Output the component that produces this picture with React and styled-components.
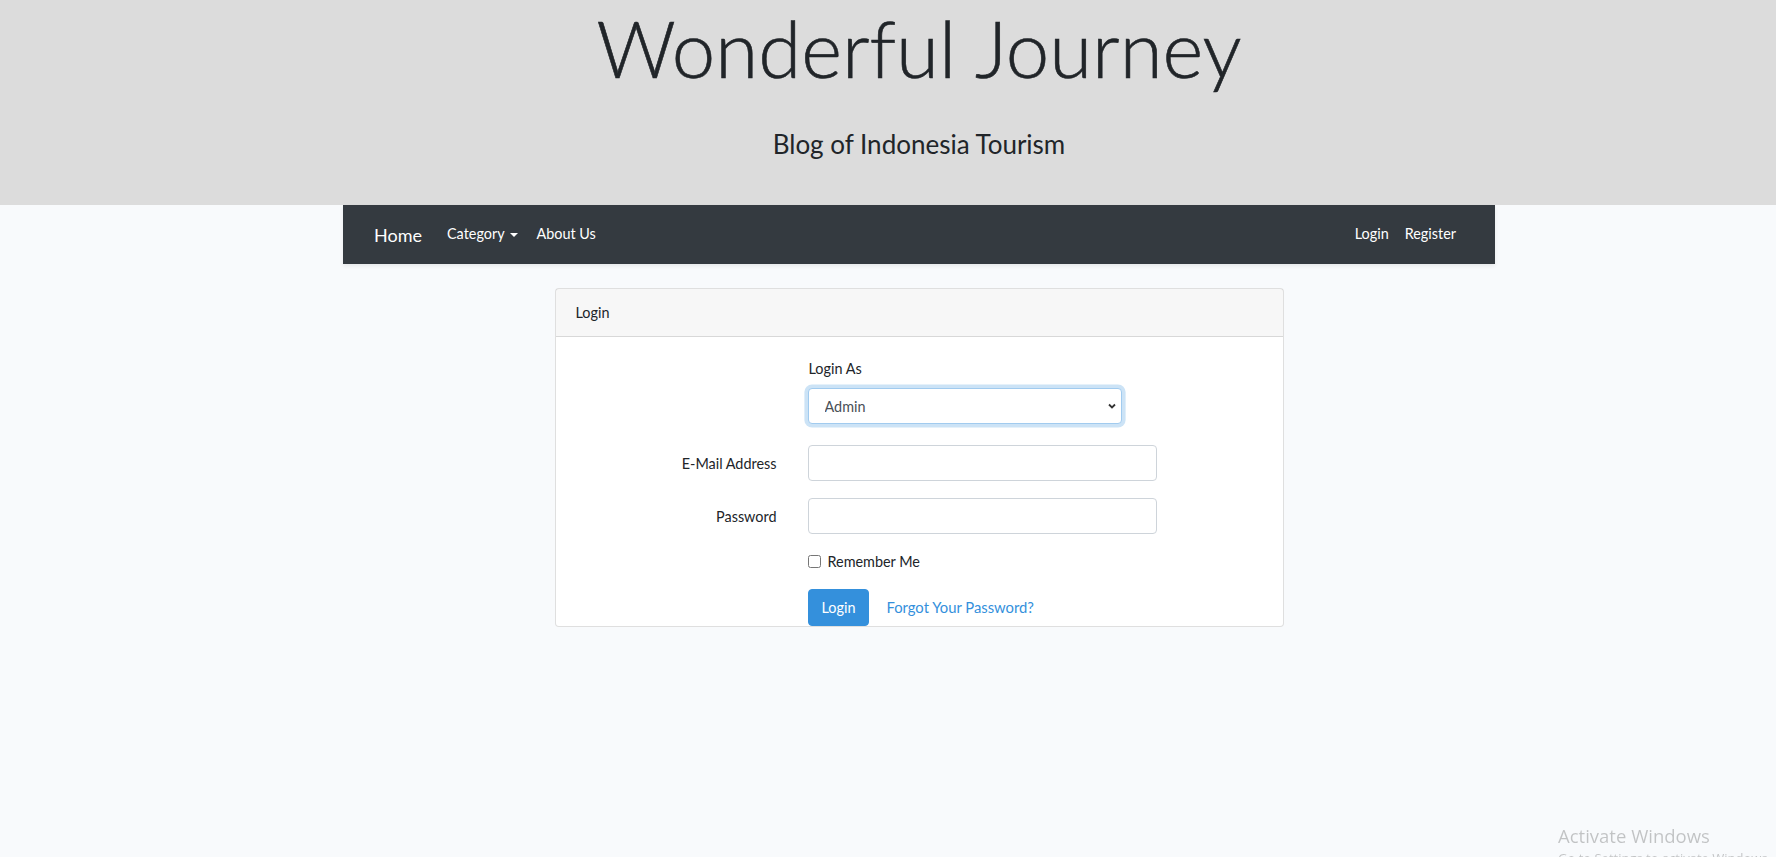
import React from 'react';
import styled, { createGlobalStyle } from 'styled-components';

const GlobalStyle = createGlobalStyle`
  html, body {
    margin: 0;
    background: #f8fafc;
  }

  body {
    font-family: Lato, "Noto Sans", sans-serif;
    font-size: 14.4px;
    line-height: 1.6;
    color: #212529;
  }

  * {
    box-sizing: border-box;
  }
`;

export default function App() {
  return (
    <>
      <GlobalStyle />
      <Hero>
        <Title>Wonderful Journey</Title>
        <Subtitle>Blog of Indonesia Tourism</Subtitle>
      </Hero>

      <Main>
        <Navbar>
          <Brand>Home</Brand>
          <NavLink>
            Category
            <Caret />
          </NavLink>
          <NavLink>About Us</NavLink>
          <NavRight>
            <NavLink>Login</NavLink>
            <NavLink>Register</NavLink>
          </NavRight>
        </Navbar>

        <Card>
          <CardHeader>Login</CardHeader>
          <CardBody>
            <FormRow $gap={21}>
              <span />
              <Stack>
                <FieldLabel>Login As</FieldLabel>
                <SelectWrap>
                  <Select defaultValue="admin">
                    <option value="admin">Admin</option>
                    <option value="user">User</option>
                  </Select>
                  <Chevron viewBox="0 0 10 10">
                    <path d="M2 3.5 L5 6.5 L8 3.5" />
                  </Chevron>
                </SelectWrap>
              </Stack>
            </FormRow>

            <FormRow $gap={17}>
              <RowLabel>E-Mail Address</RowLabel>
              <Input type="email" />
            </FormRow>

            <FormRow $gap={16}>
              <RowLabel>Password</RowLabel>
              <Input type="password" />
            </FormRow>

            <FormRow $gap={16}>
              <span />
              <Check>
                <input type="checkbox" />
                Remember Me
              </Check>
            </FormRow>

            <FormRow $gap={0}>
              <span />
              <Actions>
                <PrimaryButton>Login</PrimaryButton>
                <TextLink>Forgot Your Password?</TextLink>
              </Actions>
            </FormRow>
          </CardBody>
        </Card>
      </Main>

      <Watermark>
        <WatermarkTitle>Activate Windows</WatermarkTitle>
        <WatermarkText>Go to Settings to activate Windows.</WatermarkText>
      </Watermark>
    </>
  );
}

const Hero = styled.header`
  height: 205px;
  padding: 2px 0 0 62px;
  background: #dcdcdc;
  text-align: center;
`;

const Title = styled.h1`
  margin: 0;
  font-size: 78px;
  font-weight: 300;
  line-height: 1.2;
  -webkit-text-stroke: 0.6px #212529;
`;

const Subtitle = styled.p`
  margin: 33px 0 0;
  font-size: 26px;
  line-height: 1.2;
`;

const Main = styled.main`
  display: flex;
  flex-direction: column;
  align-items: center;
  padding-left: 62px;
`;

const Navbar = styled.nav`
  width: 1152px;
  height: 59px;
  padding: 0 39px 0 31px;

  display: flex;
  align-items: center;

  background: #343a40;
  box-shadow: 0 2px 4px rgba(0, 0, 0, 0.075);
`;

const Brand = styled.a`
  margin-right: 25px;
  color: #fff;
  font-size: 18px;
  line-height: 1;
`;

const NavLink = styled.a`
  display: flex;
  align-items: center;
  margin-right: 16px;
  color: #fff;
  line-height: 1;

  &:last-child {
    margin-right: 0;
  }
`;

const Caret = styled.span`
  margin-left: 5px;
  margin-right: 3px;
  border-top: 4.5px solid #fff;
  border-left: 4.5px solid transparent;
  border-right: 4.5px solid transparent;
`;

const NavRight = styled.div`
  margin-left: auto;
  display: flex;
  align-items: center;
`;

const Card = styled.section`
  width: 729px;
  margin-top: 24px;
  background: #fff;
  border: 1px solid rgba(0, 0, 0, 0.125);
  border-radius: 4px;
`;

const CardHeader = styled.div`
  padding: 12px 20px;
  background: rgba(0, 0, 0, 0.03);
  border-bottom: 1px solid rgba(0, 0, 0, 0.125);
`;

const CardBody = styled.div`
  padding-top: 20px;
`;

const FormRow = styled.div`
  display: grid;
  grid-template-columns: 221px 349px;
  column-gap: 31px;
  align-items: center;
  margin-bottom: ${(p) => p.$gap}px;
`;

const Stack = styled.div`
  display: flex;
  flex-direction: column;
  align-items: flex-start;
`;

const FieldLabel = styled.label`
  margin-bottom: 8px;
  padding-left: 1px;
`;

const RowLabel = styled.label`
  text-align: right;
`;

const SelectWrap = styled.div`
  position: relative;
  width: 314px;
`;

const Select = styled.select`
  width: 100%;
  height: 36px;
  padding: 0 10px 0 16px;
  appearance: none;

  font: inherit;
  color: #495057;
  background: #fff;
  border: 1px solid #a1cbef;
  border-radius: 4px;
  box-shadow: 0 0 0 3.6px rgba(52, 144, 220, 0.25);
  outline: none;
`;

const Chevron = styled.svg`
  position: absolute;
  right: 5px;
  top: 13px;
  width: 10px;
  height: 10px;
  fill: none;
  stroke: #333;
  stroke-width: 1.8;
  pointer-events: none;
`;

const Input = styled.input`
  width: 100%;
  height: 36px;
  padding: 0 11px;

  font: inherit;
  color: #495057;
  background: #fff;
  border: 1px solid #ced4da;
  border-radius: 4px;
  outline: none;
`;

const Check = styled.label`
  display: flex;
  align-items: center;
  gap: 7px;

  input {
    width: 13px;
    height: 13px;
    margin: 0;
  }
`;

const Actions = styled.div`
  display: flex;
  align-items: center;
`;

const PrimaryButton = styled.button`
  height: 37px;
  padding: 0 13px;

  font: inherit;
  color: #fff;
  background: #3490dc;
  border: 1px solid #3490dc;
  border-radius: 4px;
`;

const TextLink = styled.a`
  margin-left: 17px;
  color: #3490dc;
  font-size: 14.8px;
`;

const Watermark = styled.div`
  position: fixed;
  left: 1558px;
  top: 824px;
  white-space: nowrap;
  color: rgba(0, 0, 0, 0.22);
  font-family: "Open Sans", sans-serif;
`;

const WatermarkTitle = styled.div`
  font-size: 18.5px;
  line-height: 24px;
`;

const WatermarkText = styled.div`
  font-size: 13px;
  line-height: 20px;
`;
